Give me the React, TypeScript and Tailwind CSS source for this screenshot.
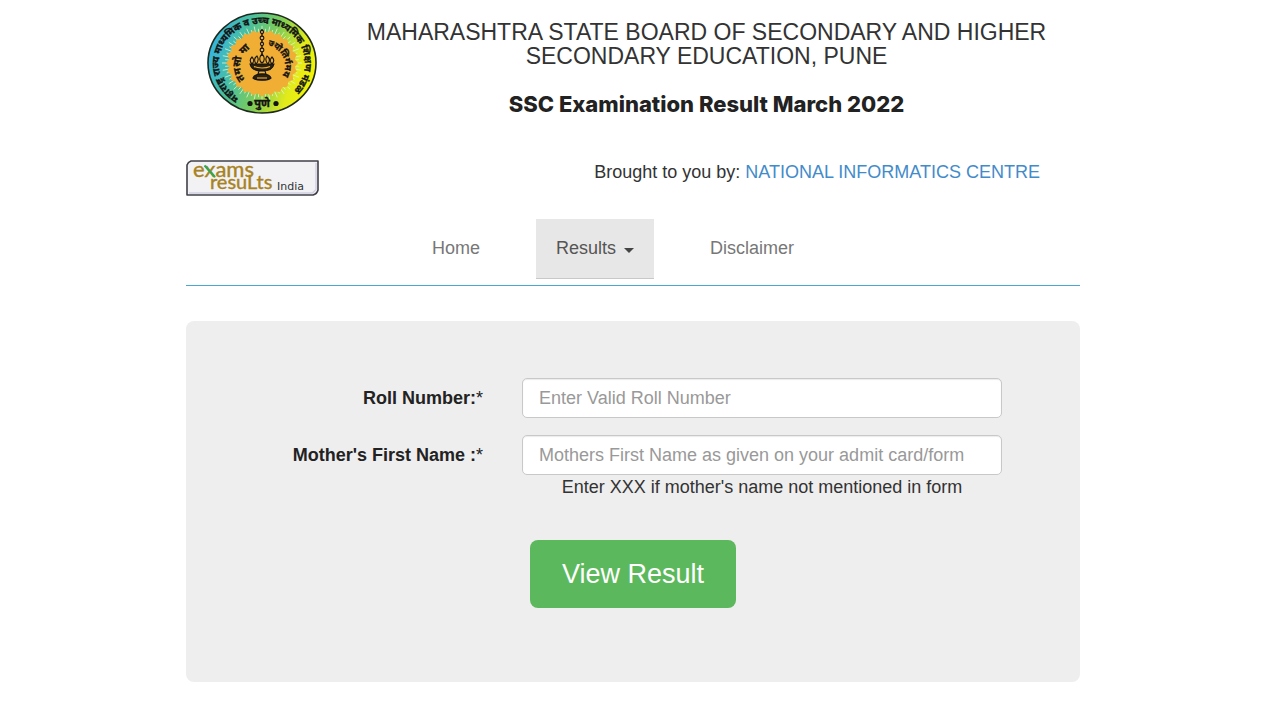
import React from "react";

const RAYS = Array.from({ length: 64 }, (_, i) => {
  const a = (i / 64) * Math.PI * 2;
  const inner = 29;
  const outer = i % 2 === 0 ? 40 : 37;
  return {
    x1: 55 + Math.cos(a) * inner,
    y1: 51 + Math.sin(a) * inner * 0.93,
    x2: 55 + Math.cos(a) * outer,
    y2: 51 + Math.sin(a) * outer * 0.93,
  };
});

const CORE = Array.from({ length: 48 }, (_, i) => {
  const a = (i / 48) * Math.PI * 2;
  const r = i % 2 === 0 ? 36 : 33;
  return `${(55 + Math.cos(a) * r).toFixed(1)},${(51 + Math.sin(a) * r * 0.93).toFixed(1)}`;
}).join(" ");

function BoardEmblem() {
  return (
    <svg viewBox="0 0 110 102" className="h-[102px] w-[110px] shrink-0 overflow-visible" role="img" aria-label="Board emblem">
      <defs>
        <linearGradient id="ring" x1="0" y1="0.35" x2="1" y2="0.65">
          <stop offset="0" stopColor="#35b4e4" />
          <stop offset="0.28" stopColor="#48bfa0" />
          <stop offset="0.55" stopColor="#7fcd55" />
          <stop offset="0.8" stopColor="#e2ea1c" />
          <stop offset="1" stopColor="#f8f200" />
        </linearGradient>
        <path id="outerArc" d="M32 85.500 A43 40 0 1 1 80 84" />
        <path id="leftArc" d="M38 67 A20 20 0 0 1 52 34" />
        <path id="rightArc" d="M61 34 A20 20 0 0 1 72 68" />
      </defs>
      <ellipse cx="55" cy="51" rx="54" ry="50" fill="url(#ring)" stroke="#1d2a1d" strokeWidth="1.6" />
      <g stroke="#e8f4d2" strokeWidth="1" opacity="0.8">
        {RAYS.map((r, i) => (
          <line key={i} x1={r.x1} y1={r.y1} x2={r.x2} y2={r.y2} />
        ))}
      </g>
      <polygon points={CORE} fill="#f0ae35" />
      <g
        fill="#141414"
        stroke="#141414"
        strokeWidth="0.35"
        fontFamily="'Noto Sans Devanagari', 'Noto Sans', sans-serif"
        fontWeight="700"
      >
        <text fontSize="9.5">
          <textPath href="#outerArc">महाराष्ट्र राज्य माध्यमिक व उच्च माध्यमिक शिक्षण मंडळ</textPath>
        </text>
        <text x="55" y="95" fontSize="11" textAnchor="middle">पुणे</text>
        <text fontSize="10">
          <textPath href="#leftArc">तमसो मा</textPath>
        </text>
        <text fontSize="9">
          <textPath href="#rightArc">ज्योतिर्गमय</textPath>
        </text>
      </g>
      <circle cx="43" cy="91.5" r="2.6" fill="#141414" />
      <circle cx="69" cy="91.5" r="2.6" fill="#141414" />
      <g fill="#f0ae35" stroke="#141414" strokeWidth="1.1">
        <path d="M55 17v30" strokeWidth="1.4" />
        <circle cx="55" cy="20" r="1.6" />
        <circle cx="55" cy="26" r="1.9" />
        <circle cx="55" cy="32" r="1.6" />
        <circle cx="55" cy="38" r="1.9" />
        <path d="M55 42c-3 3-3 7 0 9c3-2 3-6 0-9z" />
        <path d="M50 44c-3 2-3 5-1 8c2-2 3-5 1-8zM60 44c3 2 3 5 1 8c-2-2-3-5-1-8z" />
        <path d="M45 45c-3 3-2 5 0 7c2-2 2-5 0-7zM65 45c3 3 2 5 0 7c-2-2-2-5 0-7z" />
        <path d="M43 52h24c-1 5-5 7-12 7s-11-2-12-7z" fill="#2a2110" />
        <path d="M47 54.500c4 2 12 2 16 0" fill="none" stroke="#f0ae35" />
        <path d="M52 59h6l1 3h-8z" />
        <path d="M46 66c1-3 4-4 9-4s8 1 9 4c-3 3-15 3-18 0z" fill="#2a2110" />
        <path d="M50 66h10" fill="none" stroke="#f0ae35" />
      </g>
    </svg>
  );
}

function ExamsResultsLogo() {
  return (
    <svg viewBox="0 0 133 36" className="h-9 w-[133px] overflow-visible" role="img" aria-label="Exams results India">
      <path d="M5 1H132V30Q131 34 127 35H1V5Q2 2 5 1Z" fill="#f2f2f5" stroke="#404048" strokeWidth="1.6" strokeLinejoin="round" />
      <path d="M130 3V29.500L126.500 33H3" fill="none" stroke="#cfcfe2" strokeWidth="1.4" />
      <g fill="#a8821e" stroke="#a8821e" strokeWidth="0.4" fontFamily="Lato, sans-serif">
        <text x="7" y="17" fontSize="22">exams</text>
        <text x="24" y="29" fontSize="20">resuLts</text>
      </g>
      <path d="M18.500 5.500L29 17" stroke="#2fa84f" strokeWidth="2" />
      <text x="91" y="30" fill="#333" fontFamily="'DejaVu Sans', sans-serif" fontSize="11">India</text>
    </svg>
  );
}

const inputClass =
  "block h-10 w-full rounded-[5px] border border-[#c8c8c8] bg-white px-4 text-lg text-[#555] shadow-[inset_0_1px_1px_rgba(0,0,0,0.08)] placeholder:text-[#999] placeholder:opacity-100";

export default function App() {
  return (
    <div className="min-h-screen bg-white pr-3.5 pb-9 font-['Liberation_Sans',Arial,sans-serif] text-lg text-[#333]">
      <div className="mx-auto max-w-[894px]">
        <header className="flex items-start gap-4 pt-3 pl-[21px]">
          <BoardEmblem />
          <div className="flex-1 pt-2 text-center">
            <h1 className="text-[23px] leading-6">
              MAHARASHTRA STATE BOARD OF SECONDARY AND HIGHER SECONDARY EDUCATION, PUNE
            </h1>
            <h2 className="mt-6 font-[Inter,sans-serif] text-[22px] leading-6 font-extrabold text-[#222]">
              SSC Examination Result March 2022
            </h2>
          </div>
        </header>

        <div className="mt-11 flex items-start justify-between pr-10">
          <ExamsResultsLogo />
          <p className="leading-6">
            Brought to you by:{" "}
            <a href="#nic" className="text-[#428bca]">NATIONAL INFORMATICS CENTRE</a>
          </p>
        </div>

        <nav className="mt-[23px] flex justify-center border-b border-[#4ba6d3] pr-10 pb-1.5 text-[#777]">
          <a href="#home" className="pt-[17px] pr-5 pb-[18px] pl-5 leading-6">Home</a>
          <button type="button" className="mx-9 flex items-center gap-2 border-b border-[#c8c8c8] bg-[#e7e7e7] px-5 pt-[17px] pb-[18px] leading-6 text-[#555]">
            Results
            <svg viewBox="0 0 10 5" className="mt-1 h-[5px] w-2.5" aria-hidden="true">
              <path d="M0 0H10L5 5Z" fill="#444" />
            </svg>
          </button>
          <a href="#disclaimer" className="px-5 pt-[17px] pb-[18px] leading-6">Disclaimer</a>
        </nav>

        <form className="mt-[35px] rounded-lg bg-[#eee] pt-[57px] pr-[78px] pb-[74px]" onSubmit={(e) => e.preventDefault()}>
          <div className="grid grid-cols-[297fr_480fr] items-center gap-x-[39px]">
            <label htmlFor="roll" className="text-right font-bold text-[#222]">
              Roll Number:<span className="font-normal">*</span>
            </label>
            <input id="roll" type="text" placeholder="Enter Valid Roll Number" className={inputClass} />
            <label htmlFor="mother" className="mt-[17px] text-right font-bold text-[#222]">
              Mother's First Name :<span className="font-normal">*</span>
            </label>
            <div className="mt-[17px]">
              <input id="mother" type="text" placeholder="Mothers First Name as given on your admit card/form" className={inputClass} />
            </div>
            <p className="col-start-2 text-center leading-6">Enter XXX if mother's name not mentioned in form</p>
            <div className="col-start-2 mt-[41px] pl-2">
              <button type="submit" className="h-[68px] rounded-lg bg-[#5cb85c] px-8 text-[27px] text-white">
                View Result
              </button>
            </div>
          </div>
        </form>
      </div>
    </div>
  );
}
